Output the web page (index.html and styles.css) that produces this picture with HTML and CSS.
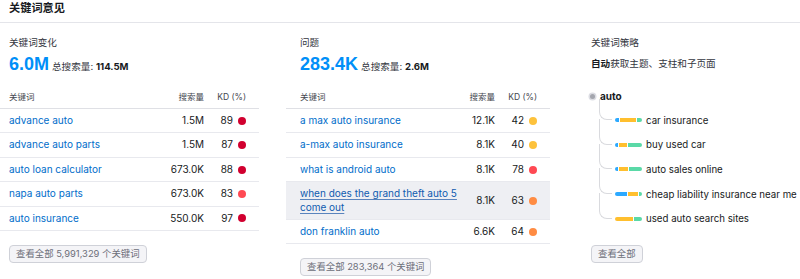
FILE: index.html
```html
<!DOCTYPE html>
<html lang="zh-CN">
  <head>
    <meta charset="UTF-8" />
    <meta name="viewport" content="width=device-width, initial-scale=1.0" />
    <title>关键词意见</title>
    <link rel="stylesheet" href="styles.css">
  </head>
  <body>
    <header class="page-header">关键词意见</header>
    <main class="columns">
      <!-- Keyword variations -->
      <section class="panel">
        <div class="panel-title">关键词变化</div>
        <div class="metric">
          <span class="metric-value">6.0M</span>
          <span class="metric-label">总搜索量: <b>114.5M</b></span>
        </div>
        <table class="kw-table">
          <colgroup><col /><col class="col-vol" /><col class="col-kd" /></colgroup>
          <thead>
            <tr><th>关键词</th><th class="num">搜索量</th><th class="num kd-cell">KD (%)</th></tr>
          </thead>
          <tbody>
            <tr><td><a href="#">advance auto</a></td><td class="num">1.5M</td><td class="num kd-cell"><span class="kd">89<i class="kd-dot very-hard"></i></span></td></tr>
            <tr><td><a href="#">advance auto parts</a></td><td class="num">1.5M</td><td class="num kd-cell"><span class="kd">87<i class="kd-dot very-hard"></i></span></td></tr>
            <tr><td><a href="#">auto loan calculator</a></td><td class="num">673.0K</td><td class="num kd-cell"><span class="kd">88<i class="kd-dot very-hard"></i></span></td></tr>
            <tr><td><a href="#">napa auto parts</a></td><td class="num">673.0K</td><td class="num kd-cell"><span class="kd">83<i class="kd-dot hard"></i></span></td></tr>
            <tr><td><a href="#">auto insurance</a></td><td class="num">550.0K</td><td class="num kd-cell"><span class="kd">97<i class="kd-dot very-hard"></i></span></td></tr>
          </tbody>
        </table>
        <div class="panel-footer"><button class="view-all">查看全部 5,991,329 个关键词</button></div>
      </section>

      <!-- Questions -->
      <section class="panel">
        <div class="panel-title">问题</div>
        <div class="metric">
          <span class="metric-value">283.4K</span>
          <span class="metric-label">总搜索量: <b>2.6M</b></span>
        </div>
        <table class="kw-table">
          <colgroup><col /><col class="col-vol" /><col class="col-kd" /></colgroup>
          <thead>
            <tr><th>关键词</th><th class="num">搜索量</th><th class="num kd-cell">KD (%)</th></tr>
          </thead>
          <tbody>
            <tr><td><a href="#">a max auto insurance</a></td><td class="num">12.1K</td><td class="num kd-cell"><span class="kd">42<i class="kd-dot possible"></i></span></td></tr>
            <tr><td><a href="#">a-max auto insurance</a></td><td class="num">8.1K</td><td class="num kd-cell"><span class="kd">40<i class="kd-dot possible"></i></span></td></tr>
            <tr><td><a href="#">what is android auto</a></td><td class="num">8.1K</td><td class="num kd-cell"><span class="kd">78<i class="kd-dot hard"></i></span></td></tr>
            <tr class="is-hover"><td><a href="#">when does the grand theft auto 5 come out</a></td><td class="num">8.1K</td><td class="num kd-cell"><span class="kd">63<i class="kd-dot difficult"></i></span></td></tr>
            <tr><td><a href="#">don franklin auto</a></td><td class="num">6.6K</td><td class="num kd-cell"><span class="kd">64<i class="kd-dot difficult"></i></span></td></tr>
          </tbody>
        </table>
        <div class="panel-footer"><button class="view-all">查看全部 283,364 个关键词</button></div>
      </section>

      <!-- Keyword strategy -->
      <section class="panel">
        <div class="panel-title">关键词策略</div>
        <div class="strategy-note"><b>自动</b>获取主题、支柱和子页面</div>
        <div class="tree">
          <div class="tree-root"><span class="root-dot"></span>auto</div>
          <ul class="tree-list">
            <li class="tree-item">
              <span class="topic-bar"><i class="seg blue" style="width:4px"></i><i class="seg yellow" style="width:16px"></i><i class="seg green" style="width:5px"></i></span>
              car insurance
            </li>
            <li class="tree-item">
              <span class="topic-bar"><i class="seg blue" style="width:3px"></i><i class="seg yellow" style="width:8px"></i><i class="seg green" style="width:14px"></i></span>
              buy used car
            </li>
            <li class="tree-item">
              <span class="topic-bar"><i class="seg blue" style="width:3px"></i><i class="seg yellow" style="width:9px"></i><i class="seg green" style="width:13px"></i></span>
              auto sales online
            </li>
            <li class="tree-item">
              <span class="topic-bar"><i class="seg blue" style="width:12px"></i><i class="seg yellow" style="width:10px"></i><i class="seg green" style="width:3px"></i></span>
              cheap liability insurance near me
            </li>
            <li class="tree-item">
              <span class="topic-bar"><i class="seg yellow" style="width:18px"></i><i class="seg green" style="width:8px"></i></span>
              used auto search sites
            </li>
          </ul>
        </div>
        <div class="panel-footer"><button class="view-all">查看全部</button></div>
      </section>
    </main>
  </body>
</html>
```

FILE: styles.css
```css
* {
  margin: 0;
  padding: 0;
  box-sizing: border-box;
}
body {
  font-family: Inter, "Noto Sans CJK SC", sans-serif;
  color: #171a22;
  background: #fff;
  overflow: hidden;
}
.page-header {
  height: 23px;
  padding-left: 9px;
  border-bottom: 1px solid #e4e5ea;
  font-size: 11.2px;
  font-weight: 700;
  line-height: 17px;
}
.columns {
  display: grid;
  grid-template-columns: 264px 264px 218px;
  column-gap: 27px;
  margin-left: -5px;
}
.panel {
  min-width: 0;
}
.panel-title {
  padding: 12px 14px 0;
  font-size: 9.6px;
  line-height: 16px;
  color: #333640;
}
.metric {
  display: flex;
  align-items: baseline;
  padding: 2px 14px 0;
  height: 24px;
}
.metric-value {
  font-family: "Liberation Sans", Arial, sans-serif;
  font-size: 18px;
  font-weight: 700;
  line-height: 22px;
  color: #008ff8;
}
.metric-label {
  margin-left: 3px;
  font-size: 9.6px;
  color: #333640;
}
.metric-label b {
  color: #171a22;
}
.strategy-note {
  padding: 2px 14px 0;
  height: 24px;
  font-size: 9.6px;
  line-height: 22px;
  color: #333640;
}
.strategy-note b {
  color: #171a22;
}

/* tables */
.kw-table {
  width: 264px;
  margin-top: 12px;
  table-layout: fixed;
  border-collapse: separate;
  border-spacing: 0;
}
.col-vol {
  width: 34px;
}
.col-kd {
  width: 55px;
}
.kw-table th {
  padding: 4px 0;
  font-size: 8.5px;
  font-weight: 400;
  line-height: 13px;
  color: #45474f;
  text-align: left;
  border-bottom: 1px solid #dfe0e5;
}
.kw-table td {
  padding: 5px 0;
  font-size: 10px;
  line-height: 13.4px;
  border-bottom: 1px solid #e8e9ee;
}
.kw-table th:first-child,
.kw-table td:first-child {
  padding-left: 14px;
}
.kw-table .num {
  text-align: right;
  white-space: nowrap;
}
.kw-table .kd-cell {
  padding-right: 13px;
}
.kw-table a {
  color: #006dca;
  text-decoration: none;
}
.kw-table tr.is-hover td {
  background: #eeeff3;
}
.kw-table tr.is-hover a {
  color: #0f5bb0;
  text-decoration: underline;
  text-decoration-color: #5a84bd;
  text-underline-offset: 2px;
}
.kd {
  display: inline-flex;
  align-items: center;
  gap: 5px;
}
.kd-dot {
  width: 8px;
  height: 8px;
  border-radius: 50%;
}
.kd-dot.very-hard {
  background: #d1002f;
}
.kd-dot.hard {
  background: #ff4953;
}
.kd-dot.difficult {
  background: #ff8c43;
}
.kd-dot.possible {
  background: #fdc23c;
}

/* footer button */
.panel-footer {
  display: flex;
  padding: 14px 14px 0;
}
.view-all {
  height: 18px;
  padding: 0 6px;
  border: 1px solid #cfd1d8;
  border-radius: 4px;
  background: #f4f4f7;
  color: #6c6e79;
  font-family: inherit;
  font-size: 9.4px;
  line-height: 16px;
}

/* topic tree */
.tree {
  padding: 9px 0 0 14px;
}
.tree-root {
  display: flex;
  align-items: center;
  height: 24px;
  font-size: 10px;
  font-weight: 700;
}
.root-dot {
  width: 5px;
  height: 5px;
  margin: 0 5px 0 -1px;
  border-radius: 50%;
  background: #a4a6ae;
  box-shadow: 0 0 0 1.5px #dcdde3;
}
.tree-list {
  list-style: none;
  margin-left: 8px;
}
.tree-item {
  position: relative;
  display: flex;
  align-items: center;
  height: 24.6px;
  padding-left: 16px;
  font-size: 9.7px;
  white-space: nowrap;
}
.tree-item::before {
  content: "";
  position: absolute;
  left: 0;
  bottom: 50%;
  width: 12px;
  height: 24.6px;
  border-left: 1px solid #d9dade;
  border-bottom: 1px solid #d9dade;
  border-bottom-left-radius: 8px;
}
.tree-item:first-child::before {
  height: 20px;
}
.topic-bar {
  display: flex;
  gap: 1px;
  width: 27px;
  height: 4px;
  margin-right: 4px;
  border-radius: 2px;
  overflow: hidden;
  flex-shrink: 0;
}
.seg {
  height: 100%;
}
.seg.blue {
  background: #2ca9ff;
}
.seg.yellow {
  background: #ffbf2e;
}
.seg.green {
  background: #5ad9a7;
}
```
